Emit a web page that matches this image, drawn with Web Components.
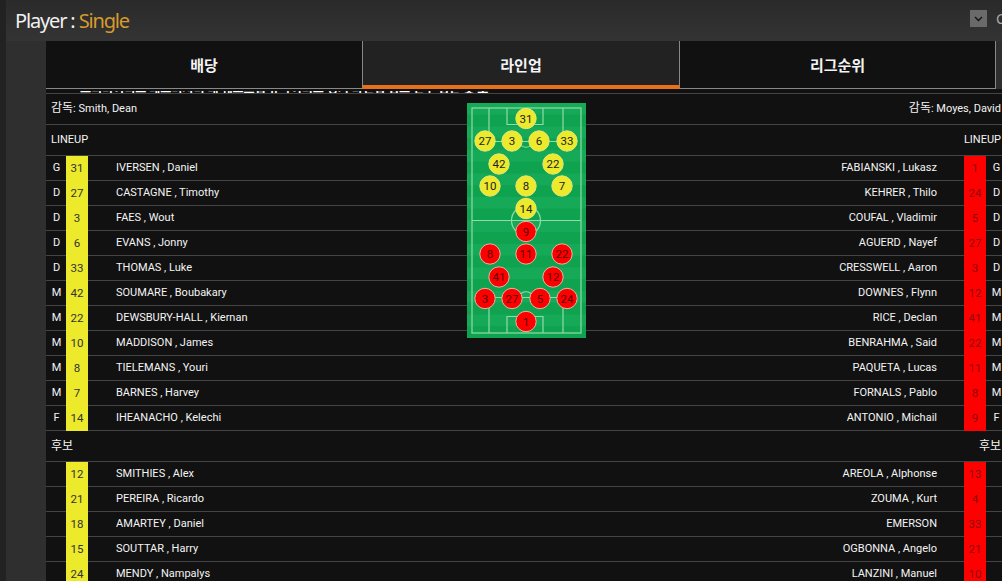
<!DOCTYPE html>
<html><head><meta charset="utf-8"><style>
html,body{margin:0;height:581px;overflow:hidden;background:#2f2f2f}
body{font-family:Roboto,"Noto Sans CJK KR",sans-serif}
</style></head><body>
<app-shell></app-shell>
<script>
const HOME=[['G',31,'IVERSEN , Daniel'],['D',27,'CASTAGNE , Timothy'],['D',3,'FAES , Wout'],['D',6,'EVANS , Jonny'],['D',33,'THOMAS , Luke'],['M',42,'SOUMARE , Boubakary'],['M',22,'DEWSBURY-HALL , Kiernan'],['M',10,'MADDISON , James'],['M',8,'TIELEMANS , Youri'],['M',7,'BARNES , Harvey'],['F',14,'IHEANACHO , Kelechi']];
const AWAY=[['G',1,'FABIANSKI , Lukasz'],['D',24,'KEHRER , Thilo'],['D',5,'COUFAL , Vladimir'],['D',27,'AGUERD , Nayef'],['D',3,'CRESSWELL , Aaron'],['M',12,'DOWNES , Flynn'],['M',41,'RICE , Declan'],['M',22,'BENRAHMA , Said'],['M',11,'PAQUETA , Lucas'],['M',8,'FORNALS , Pablo'],['F',9,'ANTONIO , Michail']];
const HSUB=[[12,'SMITHIES , Alex'],[21,'PEREIRA , Ricardo'],[18,'AMARTEY , Daniel'],[15,'SOUTTAR , Harry'],[24,'MENDY , Nampalys']];
const ASUB=[[13,'AREOLA , Alphonse'],[4,'ZOUMA , Kurt'],[33,'EMERSON'],[21,'OGBONNA , Angelo'],[10,'LANZINI , Manuel']];
const HP=[[31,526,118.5],[27,485,141],[3,512,141],[6,539,141],[33,567,141],[42,499,164],[22,553,164],[10,490,186],[8,526,186],[7,562,186],[14,526,208.5]];
const AP=[[9,526,231.5],[8,490,254],[11,526,254],[22,562,254],[41,499,277],[12,553,277],[3,485,298.5],[27,512,298.5],[5,540,298.5],[24,567,298.5],[1,526,321.5]];

class TopBar extends HTMLElement{constructor(){super();this.attachShadow({mode:'open'}).innerHTML=`<style>
:host{display:flex;align-items:center;justify-content:space-between;height:41px;padding-left:9px;box-sizing:border-box;background:linear-gradient(#2a2a2a,#343434)}
.t{font:400 20px "Noto Sans",sans-serif;color:#f0f0f0;letter-spacing:-1.15px}.t b{font-weight:400;color:#d69a2d}
.r{display:flex;align-items:center;gap:9px;width:32px;margin-top:-4px;overflow:hidden}
.c{width:17px;height:17px;background:#6a6a6a;display:flex;align-items:center;justify-content:center;flex:none}
.o{font:14px "Noto Sans",sans-serif;color:#aaa;flex:none}
</style><div class="t">Player : <b>Single</b></div><div class="r"><div class="c"><svg width="9" height="6" viewBox="0 0 9 6"><path d="M1 1l3.500 3.500L8 1" fill="none" stroke="#111" stroke-width="1.4"/></svg></div><span class="o">C</span></div>`}}
customElements.define('top-bar',TopBar);

class TabBar extends HTMLElement{constructor(){super();this.attachShadow({mode:'open'}).innerHTML=`<style>
:host{display:grid;grid-template-columns:316px 318px 316px;grid-template-rows:47px;width:950px;height:48px;background:#111;box-sizing:border-box;border-bottom:1px solid #888}
div{display:flex;align-items:center;justify-content:center;font:700 15px Roboto,"Noto Sans CJK KR",sans-serif;color:#f4f4f4;box-sizing:border-box;height:47px;padding-bottom:1px}
.a{background:#222;border-left:1px solid #888;border-right:1px solid #888;border-bottom:4px solid #e8701a;height:48px;padding-bottom:0;padding-top:3px}
.l{border-right:1px solid #888}
</style><div>배당</div><div class="a">라인업</div><div class="l">리그순위</div>`}}
customElements.define('tab-bar',TabBar);

class PlayerRow extends HTMLElement{constructor(){super();const d=this.dataset;this.attachShadow({mode:'open'}).innerHTML=`<style>
:host{display:grid;grid-template-columns:20px 22px 1fr 22px 20px;height:25px;box-sizing:border-box;border-bottom:1px solid #444;font-size:11px;color:#f4f4f4;line-height:24px}
div{white-space:nowrap}
.p{text-align:center;padding-left:1px;box-sizing:border-box}.n{text-align:center;color:#333;height:25px;font-size:11.5px}.hn{background:#ecea2b}.an{background:#f00;color:#8a0a0a}
.m{display:flex;justify-content:space-between;padding:0 27px 0 28px}
</style><div class="p">${d.hp||''}</div><div class="n hn">${d.hn}</div><div class="m"><span>${d.hname}</span><span>${d.aname}</span></div><div class="n an">${d.an}</div><div class="p">${d.ap||''}</div>`}}
customElements.define('player-row',PlayerRow);

class InfoRow extends HTMLElement{constructor(){super();this.attachShadow({mode:'open'}).innerHTML=`<style>
:host{display:flex;justify-content:space-between;align-items:center;height:31px;box-sizing:border-box;border-bottom:1px solid #444;padding:0 5px 5px;font-size:11px;color:#f4f4f4}
:host([data-low]){padding-bottom:1px}
:host([data-mid]){padding-bottom:3px}
</style><span><slot name="l"></slot></span><span><slot name="r"></slot></span>`}}
customElements.define('info-row',InfoRow);

class ClipRow extends HTMLElement{constructor(){super();this.attachShadow({mode:'open'}).innerHTML=`<style>
:host{display:block;height:5px;box-sizing:border-box;border-bottom:1px solid #444;background:#111;padding:2px 0 0 34px}
.w{height:2px;overflow:hidden;width:412px}
.i{margin-top:-9.5px;font:700 12px Roboto,"Noto Sans CJK KR",sans-serif;color:#fff;white-space:nowrap;line-height:15px}
</style><div class="w"><div class="i"><slot></slot></div></div>`}}
customElements.define('clip-row',ClipRow);

class PitchMap extends HTMLElement{constructor(){super();
const dot=(p,c)=>`<g><circle cx="${p[1]-467}" cy="${p[2]-103}" r="10.2" fill="${c}" stroke="${c=='#f00'?'#e0b8a8':'#e8e678'}" stroke-width="1"/><text x="${p[1]-467}" y="${p[2]-99}" text-anchor="middle" fill="${c=='#f00'?'#5a0000':'#222'}">${p[0]}</text></g>`;
let st='';for(let i=0;i<10;i++)st+=`<rect x="0" y="${i*23.5}" width="119" height="11.75" fill="#16a958"/>`;
this.attachShadow({mode:'open'}).innerHTML=`<style>
:host{position:absolute;left:467px;top:103px;width:119px;height:235px;display:block}
svg{display:block}text{font:11.5px Roboto,sans-serif}
.x{fill:none;stroke:#8fdca8;stroke-width:1.2}
</style><svg width="119" height="235"><rect width="119" height="235" fill="#0fa34f"/>${st}
<g class="x"><rect x="5" y="5" width="109" height="225"/><line x1="5" y1="117.500" x2="114" y2="117.500"/><circle cx="59" cy="117.500" r="14.500"/>
<path d="M22 5V38.500H96V5"/><path d="M40 5V21.500H76V5"/><path d="M50 38.500Q59 50 68 38.500"/>
<path d="M22 230V194.500H96V230"/><path d="M40 230V213.500H76V230"/><path d="M50 194.500Q59 183 68 194.500"/></g>
${HP.map(p=>dot(p,'#ecea2b')).join('')}${AP.map(p=>dot(p,'#f00')).join('')}</svg>`}}
customElements.define('pitch-map',PitchMap);

class LineupTable extends HTMLElement{constructor(){super();
const main=HOME.map((h,i)=>{const a=AWAY[i];return `<player-row data-hp="${h[0]}" data-hn="${h[1]}" data-hname="${h[2]}" data-an="${a[1]}" data-aname="${a[2]}" data-ap="${a[0]}"></player-row>`}).join('');
const sub=HSUB.map((h,i)=>`<player-row data-hn="${h[0]}" data-hname="${h[1]}" data-an="${ASUB[i][0]}" data-aname="${ASUB[i][1]}"></player-row>`).join('');
const k=t=>`<span style="font-size:12px">${t}</span>`;
this.attachShadow({mode:'open'}).innerHTML=`<style>:host{display:block;width:960px;background:#111}</style>
<clip-row>프리미어리그 레스터시티 대 웨스트햄 유나이티드 경기 라인업 정보 선수 명단 및 포메이션</clip-row>
<info-row><span slot="l">${k('감독')}: Smith, Dean</span><span slot="r">${k('감독')}: Moyes, David</span></info-row>
<info-row data-low><span slot="l">LINEUP</span><span slot="r">LINEUP</span></info-row>${main}
<info-row data-mid><span slot="l">${k('후보')}</span><span slot="r">${k('후보')}</span></info-row>${sub}`}}
customElements.define('lineup-table',LineupTable);

class AppShell extends HTMLElement{constructor(){super();this.attachShadow({mode:'open'}).innerHTML=`<style>
:host{display:block;width:1002px;height:581px;overflow:hidden;position:relative;background:#2f2f2f}
.strip{display:flex;height:100%}.rail{width:6px;background:#222;flex:none}.main{flex:1;min-width:0}
.body{padding-left:40px}
</style><div class="strip"><div class="rail"></div><div class="main"><top-bar></top-bar><div class="body"><tab-bar></tab-bar><lineup-table></lineup-table></div></div></div><pitch-map></pitch-map>`}}
customElements.define('app-shell',AppShell);
</script></body></html>
